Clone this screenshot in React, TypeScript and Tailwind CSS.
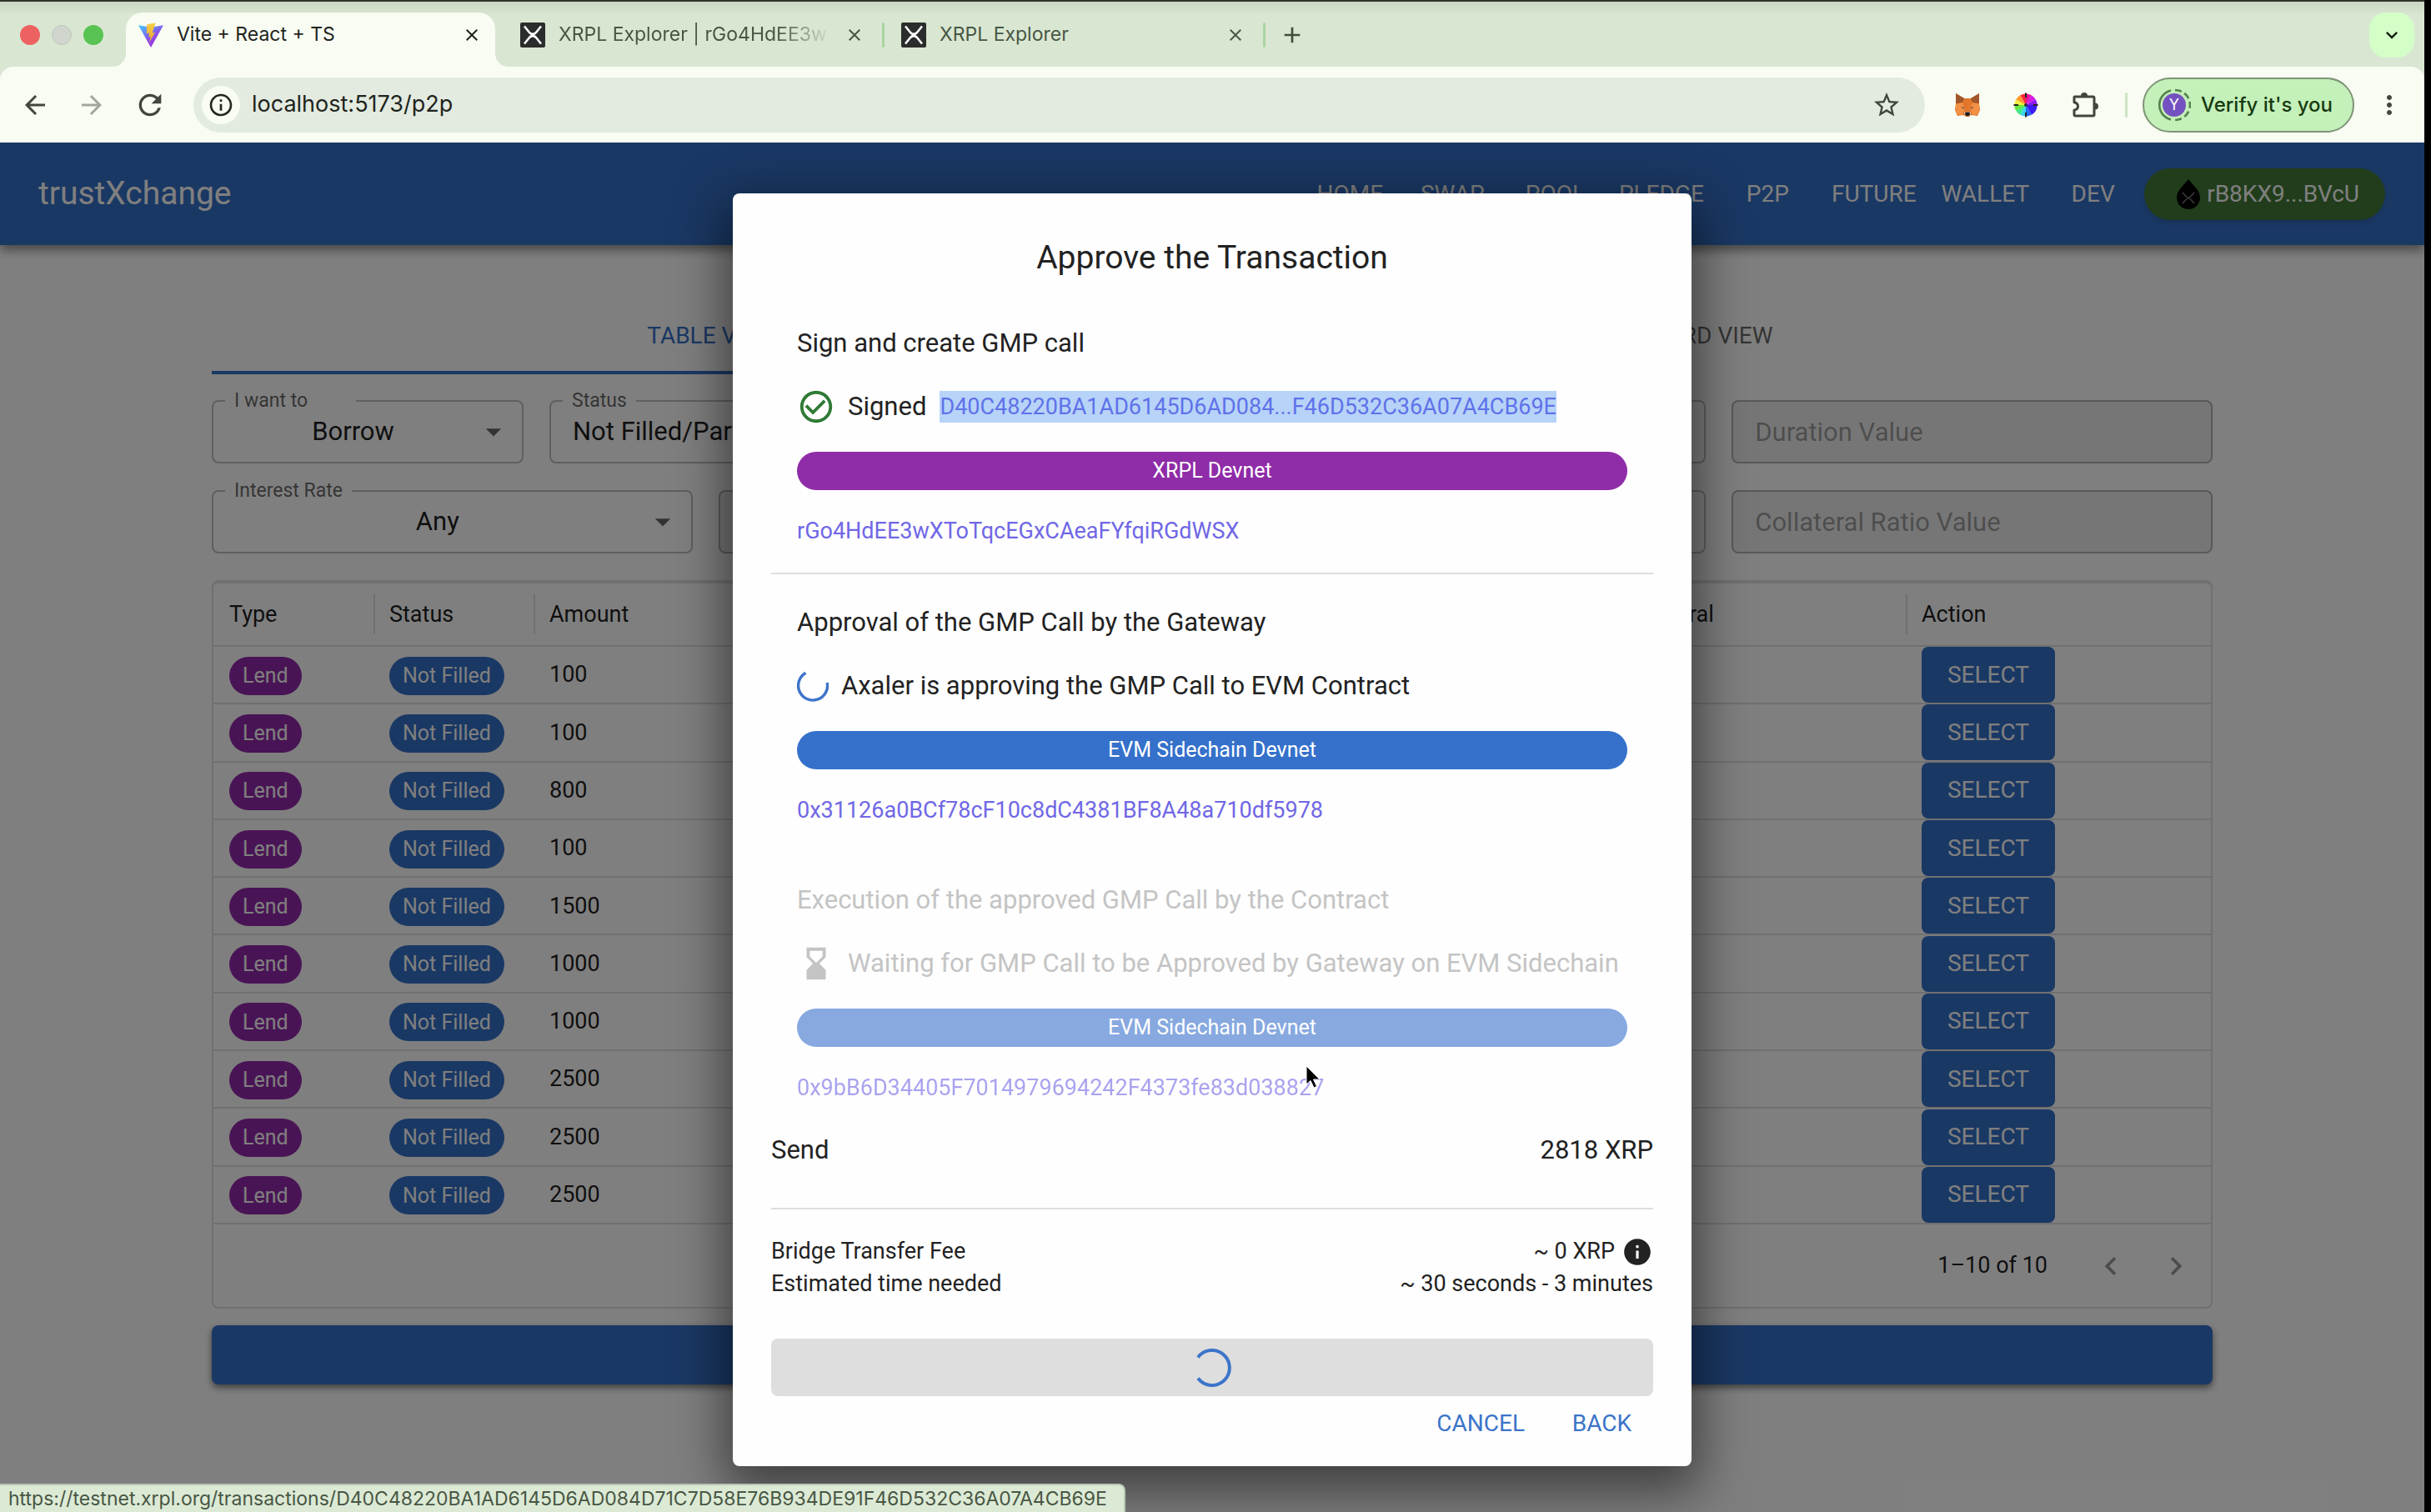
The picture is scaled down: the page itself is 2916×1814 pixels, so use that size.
import clsx from "clsx";
import type { ReactNode } from "react";
import {
  MdAdd,
  MdArrowBack,
  MdArrowDropDown,
  MdArrowForward,
  MdCheckCircleOutline,
  MdClose,
  MdExpandMore,
  MdHourglassBottom,
  MdInfo,
  MdInfoOutline,
  MdKeyboardArrowLeft,
  MdKeyboardArrowRight,
  MdMoreVert,
  MdRefresh,
  MdStarBorder,
} from "react-icons/md";

const amounts = [100, 100, 800, 100, 1500, 1000, 1000, 2500, 2500, 2500];

const navItems = [
  "Home",
  "Swap",
  "Pool",
  "Pledge",
  "P2P",
  "Future",
  "Wallet",
  "Dev",
];

const ViteLogo = () => (
  <svg viewBox="0 0 32 32" className="size-[30px] shrink-0" aria-hidden="true">
    <defs>
      <linearGradient id="vite-a" x1="0" y1="0" x2="0.7" y2="1">
        <stop offset="0" stopColor="#41d1ff" />
        <stop offset="0.6" stopColor="#8a4fe8" />
        <stop offset="1" stopColor="#a02fe0" />
      </linearGradient>
      <linearGradient id="vite-b" x1="0" y1="0" x2="0" y2="1">
        <stop offset="0" stopColor="#f7cf45" />
        <stop offset="1" stopColor="#eda52d" />
      </linearGradient>
    </defs>
    <path fill="url(#vite-a)" d="M0 3.500 16 6 32 3.500 16 32Z" />
    <path
      fill="url(#vite-b)"
      d="M22 .5 11 2.500 10.500 14l3.500-.8-1 5.500 2.800-.8-1.800 7.600 7.400-13-3.600.7Z"
    />
  </svg>
);

const XrplLogo = () => (
  <svg viewBox="0 0 30 30" className="size-[30px] shrink-0" aria-hidden="true">
    <rect width="30" height="30" rx="2" fill="#2b2d2c" />
    <path
      d="M5 4.500 11 12q4 4 8 0l6-7.500M5 25.500 11 18q4-4 8 0l6 7.500"
      fill="none"
      stroke="#fff"
      strokeWidth="2.600"
    />
  </svg>
);

const FoxLogo = () => (
  <svg viewBox="0 0 30 28" className="h-7 w-[30px]" aria-hidden="true">
    <path fill="#e2762b" d="M1 0 11 6h8l10-6v12l1 8-3 7-7-1-3 2h-4l-3-2-7 1-3-7 1-8Z" />
    <path fill="#a0562a" d="M1 0 11 6 9 11 1 12ZM29 0 19 6l2 5 8 1Z" />
    <path fill="#f29043" d="m1 13 8-2 3 8-4 7-6-1-1-6ZM29 13l-8-2-3 8 4 7 6-1 1-6Z" />
    <path fill="#5b4a43" d="m7 16 4 1 0 2ZM23 16l-4 1 0 2Z" />
    <path fill="#e0d5cc" d="m11 23 2-1h4l2 1-1 4h-6Z" />
    <path fill="#221a19" d="M12.500 22.500h5l.5 3-1.500 1.500h-3L12 25.500Z" />
  </svg>
);

const ColorWheel = () => (
  <svg viewBox="-15 -15 30 30" className="size-[30px]" aria-hidden="true">
    <path fill="#ff2a3c" d="M0 0-6.800-11.800A13.600 13.600 0 0 1 0-13.600Z" />
    <path fill="#e8129c" d="M0 0V-13.600A13.600 13.600 0 0 1 6.800-11.800Z" />
    <path fill="#d31be8" d="M0 0 6.800-11.800A13.600 13.600 0 0 1 11.800-6.800Z" />
    <path fill="#8d1cf0" d="M0 0 11.800-6.800A13.600 13.600 0 0 1 13.600 0Z" />
    <path fill="#3a1cf5" d="M0 0H13.600A13.600 13.600 0 0 1 6.800 11.800Z" />
    <path fill="#2468f5" d="M0 0 6.800 11.800A13.600 13.600 0 0 1 0 13.600Z" />
    <path fill="#38d6f0" d="M0 0V13.600A13.600 13.600 0 0 1-6.800 11.800Z" />
    <path fill="#3fe88a" d="M0 0-6.800 11.800A13.600 13.600 0 0 1-11.800 6.800Z" />
    <path fill="#66e838" d="M0 0-11.800 6.800A13.600 13.600 0 0 1-13.600 0Z" />
    <path fill="#f0ee3a" d="M0 0H-13.600A13.600 13.600 0 0 1-11.800-6.800Z" />
    <path fill="#ff9a2a" d="M0 0-11.800-6.800A13.600 13.600 0 0 1-6.800-11.800Z" />
    <path d="M-14.500 0H-9M9 0H14.500M0-14.500V-9M0 9V14.500" stroke="#222" strokeWidth="2" />
    <circle r="2" fill="#333" />
  </svg>
);

const PuzzleIcon = () => (
  <svg viewBox="0 0 32 32" className="size-8" aria-hidden="true">
    <path
      d="M3.500 6h22q1.500 0 1.500 1.500v20q0 1.500-1.500 1.500h-21Q3 29 3 27.500v-5.300q4.500-1 4.500-4.700T3 12.800V6.500Z"
      fill="none"
      stroke="currentColor"
      strokeWidth="3"
      strokeLinejoin="round"
    />
    <path d="M11 5a4 4 0 0 1 8 0ZM28 13.500a4 4 0 0 1 0 8Z" fill="currentColor" />
  </svg>
);

const ProfileBadge = () => (
  <span className="relative flex size-10 items-center justify-center">
    <svg viewBox="-20 -20 40 40" className="absolute inset-0" aria-hidden="true">
      <path
        d="M-4 17.500A18 18 0 0 1-4-17.500"
        fill="none"
        stroke="#55834e"
        strokeWidth="2.600"
      />
      <path
        d="M1-18A18 18 0 0 1 1 18"
        fill="none"
        stroke="#55834e"
        strokeWidth="2.600"
        strokeDasharray="8 4"
      />
    </svg>
    <span className="flex size-7 items-center justify-center rounded-full bg-[#7451c0] text-lg font-normal text-white">
      Y
    </span>
  </span>
);

const WalletDrop = () => (
  <svg viewBox="0 0 28 36" className="h-9 w-7 shrink-0" aria-hidden="true">
    <path fill="#000" d="M14 0c4 6 14 13 14 22a14 14 0 0 1-28 0C0 13 10 6 14 0Z" />
    <path
      d="m7 16 4.500 5q2.500 2 5 0l4.500-5M7 29l4.500-5q2.500-2 5 0l4.500 5"
      fill="none"
      stroke="#8a8a8a"
      strokeWidth="1.200"
    />
  </svg>
);

type TabProps = { icon: ReactNode; title: string; active?: boolean };

const BrowserTab = ({ icon, title, active }: TabProps) => (
  <div
    className={clsx(
      "relative flex items-center pb-3",
      active
        ? "w-[443px] rounded-t-[20px] bg-[#f8fcf2] pr-2 pl-[15px] text-[#1f241d] before:absolute before:bottom-0 before:-left-4 before:size-4 before:bg-[radial-gradient(circle_at_0_0,transparent_16px,#f8fcf2_16px)] after:absolute after:-right-4 after:bottom-0 after:size-4 after:bg-[radial-gradient(circle_at_100%_0,transparent_16px,#f8fcf2_16px)]"
        : "w-[457px] pr-4 pl-5 text-[#485644]",
    )}
  >
    {icon}
    <span
      className={clsx(
        "ml-4 text-[23px] whitespace-nowrap",
        title.length > 20 &&
          "[mask-image:linear-gradient(to_right,black_260px,transparent_328px)]",
      )}
    >
      {title}
    </span>
    <button aria-label={`Close ${title}`} className="ml-auto p-2">
      <MdClose className="size-6" />
    </button>
    {!active && (
      <span className="absolute top-3 right-0 h-[30px] w-[3px] rounded bg-[#a9d5a1]" />
    )}
  </div>
);

const BrowserChrome = () => (
  <header className="font-[Inter,sans-serif]">
    <div className="flex h-20 border-t-2 border-[#2f332c] bg-[linear-gradient(#c9d6c3,#d9e7d2_16px)] pt-[13px]">
      <div className="flex w-[151px] items-center gap-[14px] pb-3 pl-6">
        <span className="size-6 rounded-full bg-[#ed6261]" />
        <span className="size-6 rounded-full border border-[#bfc7bb] bg-[#d0d5cd]" />
        <span className="size-6 rounded-full bg-[#58c353]" />
      </div>
      <BrowserTab active icon={<ViteLogo />} title="Vite + React + TS" />
      <div className="flex pl-[10px]">
        <BrowserTab icon={<XrplLogo />} title="XRPL Explorer | rGo4HdEE3w" />
        <BrowserTab icon={<XrplLogo />} title="XRPL Explorer" />
      </div>
      <button aria-label="New tab" className="mb-3 ml-4 text-[#3f4f3a]">
        <MdAdd className="size-8" />
      </button>
      <button
        aria-label="Search tabs"
        className="mr-3 mb-[11px] ml-auto flex w-[54px] items-center justify-center rounded-[20px] bg-[#d4fec8] text-[#10200c]"
      >
        <MdExpandMore className="size-7" />
      </button>
    </div>
    <div className="bg-[#d9e7d2]">
      <div className="flex h-[91px] items-center rounded-t-2xl bg-[#f8fcf2] px-6 text-[#41463e]">
        <button aria-label="Back">
          <MdArrowBack className="size-9" />
        </button>
        <button aria-label="Forward" disabled className="ml-8 text-[#a3a79f]">
          <MdArrowForward className="size-9" />
        </button>
        <button aria-label="Reload" className="ml-8">
          <MdRefresh className="size-10" />
        </button>
        <div className="ml-8 flex h-[66px] flex-1 items-center rounded-full bg-[#e3ebe0] pr-7 pl-[10px]">
          <span className="flex size-[46px] items-center justify-center rounded-full bg-[#f8fcf2] text-[#23271f]">
            <MdInfoOutline className="size-8" />
          </span>
          <input
            aria-label="Address"
            defaultValue="localhost:5173/p2p"
            className="ml-[14px] flex-1 bg-transparent text-[27px] text-[#1f241d] outline-none"
          />
          <button aria-label="Bookmark">
            <MdStarBorder className="size-9" />
          </button>
        </div>
        <div className="ml-9 flex items-center gap-10">
          <FoxLogo />
          <ColorWheel />
          <PuzzleIcon />
        </div>
        <span className="ml-8 h-[30px] w-[3px] rounded bg-[#cde3c5]" />
        <button className="ml-[18px] flex h-[66px] items-center gap-3 rounded-full border-2 border-[#7f9478] bg-[#c4f0b9] pr-6 pl-4 text-2xl font-medium text-[#173a11]">
          <ProfileBadge />
          Verify it's you
        </button>
        <button aria-label="Menu" className="ml-6">
          <MdMoreVert className="size-9" />
        </button>
      </div>
    </div>
  </header>
);

const NavBar = () => (
  <nav className="flex h-[123px] items-center bg-[#3570c8] pr-[47px] pl-[46px] text-white shadow-[0_6px_12px_rgba(0,0,0,0.45)]">
    <a href="#home" className="text-[39px]">
      trustXchange
    </a>
    <div className="ml-auto flex">
      {navItems.map((item) => (
        <a
          key={item}
          href={`#${item.toLowerCase()}`}
          className="min-w-[123px] px-[15px] text-center text-[28px] uppercase"
        >
          {item}
        </a>
      ))}
    </div>
    <button className="flex h-[62px] items-center gap-2 rounded-full bg-[#437a36] pr-[31px] pl-[39px] text-[28px] shadow-md">
      <WalletDrop />
      rB8KX9...BVcU
    </button>
  </nav>
);

type SelectProps = {
  id: string;
  label: string;
  value: string;
  className?: string;
};

const SelectField = ({ id, label, value, className }: SelectProps) => (
  <div className={clsx("relative h-[76px]", className)}>
    {label && (
      <label
        htmlFor={id}
        className="absolute -top-[15px] left-4 bg-white px-[11px] text-[23px] leading-8 text-black/60"
      >
        {label}
      </label>
    )}
    <select
      id={id}
      aria-label={label || "Filter"}
      className="h-full w-full appearance-none rounded-lg border-2 border-black/25 bg-transparent pr-[61px] pl-[26px] text-center text-[31px] text-black/90"
    >
      <option>{value}</option>
    </select>
    <MdArrowDropDown className="pointer-events-none absolute top-4 right-[14px] size-11 text-black/60" />
  </div>
);

const DisabledField = ({ label }: { label: string }) => (
  <input
    disabled
    aria-label={label || "Filter value"}
    placeholder={label}
    className="h-[76px] min-w-0 rounded-lg border-2 border-black/25 bg-black/7 px-[26px] text-[31px] placeholder:text-black/35"
  />
);

const OffersTable = () => (
  <div className="mt-8 rounded-lg border-2 border-t-4 border-black/12">
    <table className="h-[769px] w-full table-fixed border-collapse text-left text-[27px] text-black/90">
      <thead>
        <tr className="h-[75px] border-b-2 border-black/12">
          <th className="w-[192px] pl-[19px] font-normal">Type</th>
          <th className="w-[192px] font-normal">
            <span className="block border-l-2 border-black/12 py-1 pl-[17px]">Status</span>
          </th>
          <th className="w-[192px] font-normal">
            <span className="block border-l-2 border-black/12 py-1 pl-[17px]">Amount</span>
          </th>
          <td />
          <th className="w-[363px] pl-[19px] font-normal">Collateral</th>
          <th className="w-[366px] font-normal">
            <span className="block border-l-2 border-black/12 py-1 pl-[17px]">Action</span>
          </th>
        </tr>
      </thead>
      <tbody>
        {amounts.map((amount, i) => (
          <tr key={i} className="border-b-2 border-black/12">
            <td className="pt-0.5 pl-[19px]">
              <span className="inline-flex h-[46px] items-center rounded-full bg-[#9229aa] px-4 text-[25px] text-white">
                Lend
              </span>
            </td>
            <td className="pt-0.5 pl-[19px]">
              <span className="inline-flex h-[46px] items-center rounded-full bg-[#3570c8] px-4 text-[25px] text-white">
                Not Filled
              </span>
            </td>
            <td className="pl-[19px]">{amount}</td>
            <td />
            <td />
            <td className="pl-[19px]">
              <button className="block h-[67px] w-[160px] rounded-lg bg-[#3570c8] text-[28px] text-white">
                SELECT
              </button>
            </td>
          </tr>
        ))}
      </tbody>
    </table>
    <div className="flex h-[99px] items-center justify-end pr-5 text-[27px] text-black/90">
      1–10 of 10
      <button aria-label="Previous page" disabled className="ml-[54px] text-black/40">
        <MdKeyboardArrowLeft className="size-11" />
      </button>
      <button aria-label="Next page" disabled className="ml-[34px] text-black/40">
        <MdKeyboardArrowRight className="size-11" />
      </button>
    </div>
  </div>
);

const LendingPage = () => (
  <main className="px-[254px] pt-[63px]">
    <div className="grid grid-cols-2 text-[28px]">
      <button className="h-[92px] border-b-4 border-[#3570c8] pt-1 text-[#3570c8]">
        TABLE VIEW
      </button>
      <button className="h-[92px] text-black/60">CARD VIEW</button>
    </div>
    <div className="mt-[31px] grid grid-cols-4 gap-x-[31px] gap-y-8">
      <div className="col-span-2 flex gap-[31px]">
        <SelectField
          id="side"
          label="I want to"
          value="Borrow"
          className="w-[374px] [&>label]:w-[157px]"
        />
        <SelectField
          id="status"
          label="Status"
          value="Not Filled/Partially Filled"
          className="flex-1 [&>select]:text-left"
        />
      </div>
      <SelectField id="duration" label="" value="Any" />
      <DisabledField label="Duration Value" />
      <SelectField id="rate" label="Interest Rate" value="Any" />
      <DisabledField label="" />
      <SelectField id="ratio" label="" value="Any" />
      <DisabledField label="Collateral Ratio Value" />
    </div>
    <OffersTable />
    <button
      aria-label="Submit"
      className="mt-5 block h-[71px] w-full rounded-lg bg-[#3570c8] shadow-[0_4px_8px_rgba(0,0,0,0.5)]"
    />
  </main>
);

type StepProps = {
  title: string;
  icon: ReactNode;
  status: ReactNode;
  network: string;
  address: string;
  chip: string;
  divider?: boolean;
  waiting?: boolean;
};

const Step = ({
  title,
  icon,
  status,
  network,
  address,
  chip,
  divider,
  waiting,
}: StepProps) => (
  <section
    className={clsx(
      "px-[31px] pt-[35px] pb-[31px] text-[31px] leading-[46px]",
      divider && "border-b-2 border-[#dedede]",
      waiting && "text-[#c4c4c4]",
    )}
  >
    <h3>{title}</h3>
    <div className="mt-[30px] flex h-[46px] items-center whitespace-nowrap">
      {icon}
      {status}
    </div>
    <div
      className={clsx(
        "mt-[31px] h-[46px] rounded-full text-center text-[25px] text-white",
        chip,
      )}
    >
      {network}
    </div>
    <a
      href="#address"
      className={clsx(
        "mt-[30px] block text-[27px] leading-[38px] text-[#7067e6]",
        waiting && "opacity-60",
      )}
    >
      {address}
    </a>
  </section>
);

const ApproveDialog = () => (
  <div className="absolute inset-0 flex items-start justify-center bg-black/50 pt-[61px]">
    <div
      role="dialog"
      aria-labelledby="dialog-title"
      className="w-[1150px] rounded-lg bg-[#fefefe] px-[46px] pt-[47px] pb-5 text-[31px] text-[#222] shadow-[0_20px_60px_10px_rgba(0,0,0,0.5)]"
    >
      <h2 id="dialog-title" className="mb-[14px] text-center text-[39px] leading-[61px]">
        Approve the Transaction
      </h2>
      <Step
        title="Sign and create GMP call"
        icon={<MdCheckCircleOutline className="size-[46px] text-[#2f7a35]" />}
        status={
          <>
            <span className="ml-[15px]">Signed</span>
            <a
              href="#transaction"
              className="ml-4 h-[38px] bg-[#b7d3f8] text-[27px] leading-[38px] text-[#5f72ea]"
            >
              D40C48220BA1AD6145D6AD084...F46D532C36A07A4CB69E
            </a>
          </>
        }
        network="XRPL Devnet"
        address="rGo4HdEE3wXToTqcEGxCAeaFYfqiRGdWSX"
        chip="bg-[#8f2ca8]"
        divider
      />
      <Step
        title="Approval of the GMP Call by the Gateway"
        icon={
          <svg viewBox="0 0 38 38" className="size-[38px]" aria-hidden="true">
            <path
              d="M10.500 3.300A17.500 17.500 0 1 0 36.200 15"
              fill="none"
              stroke="#3c74c9"
              strokeWidth="3.400"
            />
          </svg>
        }
        status={
          <span className="ml-[15px]">
            Axaler is approving the GMP Call to EVM Contract
          </span>
        }
        network="EVM Sidechain Devnet"
        address="0x31126a0BCf78cF10c8dC4381BF8A48a710df5978"
        chip="bg-[#3571cb]"
      />
      <Step
        title="Execution of the approved GMP Call by the Contract"
        icon={<MdHourglassBottom className="size-[46px]" />}
        status={
          <span className="ml-[15px]">
            Waiting for GMP Call to be Approved by Gateway on EVM Sidechain
          </span>
        }
        network="EVM Sidechain Devnet"
        address="0x9bB6D34405F7014979694242F4373fe83d038827"
        chip="bg-[#87a9e0]"
        waiting
      />
      <div className="mt-[2px] flex justify-between border-b-2 border-[#dedede] pb-[46px] leading-[46px]">
        <span>Send</span>
        <span>2818 XRP</span>
      </div>
      <dl className="mt-[31px] text-[27px] leading-[39px]">
        <div className="flex justify-between">
          <dt>Bridge Transfer Fee</dt>
          <dd className="flex items-center gap-2">
            ~ 0 XRP
            <MdInfo className="size-[38px]" />
          </dd>
        </div>
        <div className="flex justify-between">
          <dt>Estimated time needed</dt>
          <dd>~ 30 seconds - 3 minutes</dd>
        </div>
      </dl>
      <button
        disabled
        aria-label="Processing"
        className="mt-[46px] flex h-[69px] w-full items-center justify-center rounded-lg bg-[#dedede]"
      >
        <svg viewBox="0 0 46 46" className="size-[46px]" aria-hidden="true">
          <path
            d="M6 10.500A21 21 0 1 1 6 35.500"
            fill="none"
            stroke="#3c74c9"
            strokeWidth="4"
          />
        </svg>
      </button>
      <div className="mt-[2px] flex justify-end gap-4 text-[28px] text-[#3b74c8]">
        <button className="h-[62px] min-w-[123px] px-[15px]">CANCEL</button>
        <button className="h-[62px] min-w-[123px] px-[15px]">BACK</button>
      </div>
    </div>
  </div>
);

export default function App() {
  return (
    <div className="relative flex h-screen flex-col overflow-hidden bg-black pr-2 font-[Roboto,sans-serif]">
      <BrowserChrome />
      <div className="relative flex-1 overflow-hidden bg-white">
        <NavBar />
        <LendingPage />
        <ApproveDialog />
        <div className="absolute bottom-0 left-0 rounded-tr-lg border-t-2 border-r-2 border-[#b9c7b2] bg-[#dcead5] pr-5 pl-[10px] font-[Inter,sans-serif] text-[23px] leading-8 text-[#485644]">
          https://testnet.xrpl.org/transactions/D40C48220BA1AD6145D6AD084D71C7D58E76B934DE91F46D532C36A07A4CB69E
        </div>
      </div>
      {/* mouse pointer */}
      <svg
        viewBox="0 0 18 28"
        className="absolute top-[1278px] left-[1566px] h-7 w-[18px]"
        aria-hidden="true"
      >
        <path
          d="M1 1v22l5-4.500 4 8.500 3.500-1.500-4-8.500H17Z"
          fill="#000"
          stroke="#fff"
          strokeWidth="1"
        />
      </svg>
    </div>
  );
}
